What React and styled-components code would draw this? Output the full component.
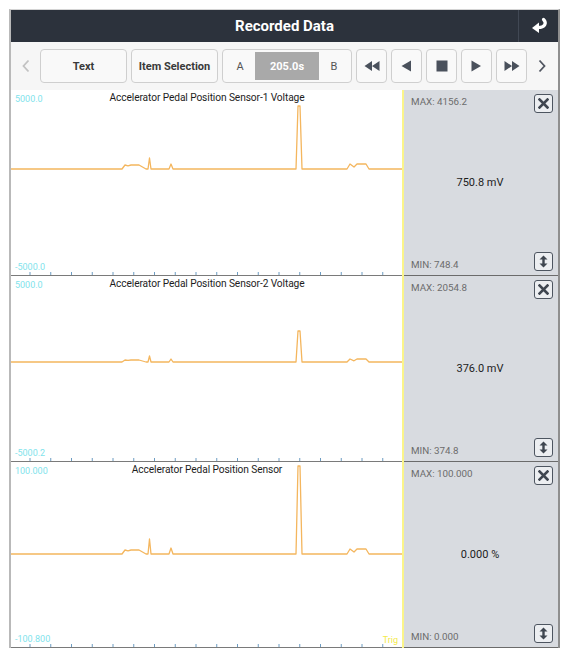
import React from 'react';
import styled, { createGlobalStyle } from 'styled-components';

const GlobalStyle = createGlobalStyle`
  body {
    margin: 0;
    background: #fff;
    font-family: Roboto, "Liberation Sans", sans-serif;
  }
`;

const Frame = styled.div`
  margin: 9px 0 0 9px;
  width: 551px;
  border-top: 1px solid #d4d4d4;
  border-left: 2px solid #b9b9b9;
  border-right: 2px solid #8f8f8f;
  box-sizing: border-box;
  position: relative;
`;

const Header = styled.div`
  height: 32px;
  background: #2c323c;
  display: grid;
  grid-template-columns: 1fr 40px;
  align-items: center;
`;

const Title = styled.div`
  color: #fff;
  font-weight: 700;
  font-size: 15px;
  text-align: center;
  padding-left: 40px;
`;

const BackBox = styled.div`
  height: 100%;
  border-left: 1px solid #414854;
  display: flex;
  align-items: center;
  justify-content: center;
`;

const Toolbar = styled.div`
  height: 48px;
  background: #f6f6f6;
  display: flex;
  align-items: flex-start;
  padding-top: 7px;
  box-sizing: border-box;
`;

const Chevron = styled.div`
  width: 29px;
  height: 34px;
  display: flex;
  align-items: center;
  justify-content: center;
  color: ${p => (p.$dim ? '#c2c2c2' : '#505560')};
`;

const Btn = styled.div`
  height: 34px;
  width: ${p => p.$w}px;
  margin-right: ${p => p.$gap ?? 4}px;
  box-sizing: border-box;
  border: 1px solid #cfcfcf;
  border-radius: 4px;
  background: #f9f9f9;
  display: flex;
  align-items: center;
  justify-content: center;
  font-size: 11px;
  font-weight: 700;
  color: #3a3a3a;
`;

const RangeGroup = styled(Btn)`
  justify-content: space-between;
  padding: 2px;
  font-weight: 400;
`;

const RangeLetter = styled.span`
  width: 30px;
  text-align: center;
  color: #555;
  font-size: 11px;
`;

const RangeValue = styled.span`
  flex: 1;
  align-self: stretch;
  background: #a9a9a9;
  color: #fff;
  font-weight: 700;
  display: flex;
  align-items: center;
  justify-content: center;
`;

const Panel = styled.div`
  display: grid;
  grid-template-columns: 391px 2px 1fr;
  height: 186px;
`;

const Chart = styled.div`
  position: relative;
  background: #fff;
`;

const Trig = styled.div`
  background: #fbf58a;
`;

const Info = styled.div`
  background: #d8dbe0;
  border-bottom: 1px solid #6b6b6b;
  display: flex;
  flex-direction: column;
  padding: 4px 5px 4px 7px;
  box-sizing: border-box;
`;

const InfoRow = styled.div`
  display: flex;
  justify-content: space-between;
  align-items: ${p => (p.$bottom ? 'flex-end' : 'flex-start')};
`;

const Stat = styled.span`
  font-size: 9.8px;
  color: #6c6c6c;
  padding-top: ${p => (p.$bottom ? 0 : 2)}px;
  line-height: 12px;
`;

const Value = styled.div`
  flex: 1;
  display: flex;
  align-items: center;
  justify-content: center;
  font-size: 11px;
  color: #1c1c1c;
  padding-right: 4px;
`;

const IconBtn = styled.div`
  width: 19px;
  height: 19px;
  box-sizing: border-box;
  border: 1.5px solid #4d5560;
  border-radius: 3px;
  background: #eceef1;
  display: flex;
  align-items: center;
  justify-content: center;
`;

const ScaleLabel = styled.span`
  position: absolute;
  left: 4px;
  font-size: 9px;
  color: #7fe3ec;
  ${p => (p.$bottom ? 'bottom: 4px;' : 'top: 4px;')}
`;

const TrigLabel = styled.span`
  position: absolute;
  right: 4px;
  bottom: 3px;
  font-size: 9px;
  color: #f3ea4a;
`;

const ChartTitle = styled.span`
  position: absolute;
  top: 2px;
  left: 0;
  width: 392px;
  text-align: center;
  font-size: 10.2px;
  color: #1d1d1d;
  letter-spacing: -0.1px;
`;

const Plot = styled.svg`
  position: absolute;
  left: 0;
  top: 0;
  width: 391px;
  height: 186px;
`;

const TabMark = styled.div`
  position: absolute;
  left: -2px;
  bottom: -2px;
  width: 34px;
  height: 2px;
  background: #1f2a66;
`;

const BackIcon = () => (
  <svg width="20" height="18" viewBox="0 0 20 18">
    <path d="M14.5 2.5 C18 6 16 10.5 9 10.5" fill="none" stroke="#fff" strokeWidth="3.2" strokeLinecap="round" />
    <path d="M10 5.5 L3 11 L10 16 Z" fill="#fff" />
  </svg>
);

const CloseIcon = () => (
  <svg width="11" height="11" viewBox="0 0 11 11">
    <path d="M1.5 1.5 L9.5 9.5 M9.5 1.5 L1.5 9.5" stroke="#3f4650" strokeWidth="2.6" strokeLinecap="square" />
  </svg>
);

const ResizeIcon = () => (
  <svg width="9" height="13" viewBox="0 0 9 13">
    <path d="M4.5 3 L4.5 10" stroke="#3f4650" strokeWidth="2.4" />
    <path d="M4.5 0.5 L8.5 4.5 L0.5 4.5 Z M4.5 12.5 L8.5 8.5 L0.5 8.5 Z" fill="#3f4650" />
  </svg>
);

const Tri = ({ dir, double, square }) => {
  if (square) {
    return (
      <svg width="12" height="12" viewBox="0 0 12 12">
        <rect x="0.5" y="0.5" width="11" height="11" fill="#4a515c" />
      </svg>
    );
  }
  const one = dir === 'l' ? 'M10 0.5 L10 11.5 L0.5 6 Z' : 'M0.5 0.5 L0.5 11.5 L10 6 Z';
  if (!double) {
    return (
      <svg width="11" height="12" viewBox="0 0 11 12">
        <path d={one} fill="#4a515c" />
      </svg>
    );
  }
  const two = dir === 'l'
    ? 'M8 1 L8 11 L0.5 6 Z M15.5 1 L15.5 11 L8 6 Z'
    : 'M0.5 1 L0.5 11 L8 6 Z M8 1 L8 11 L15.5 6 Z';
  return (
    <svg width="16" height="12" viewBox="0 0 16 12">
      <path d={two} fill="#4a515c" />
    </svg>
  );
};

// page-x of the signal features, the chart starts at x = 11
const buildPath = (base, [b, s, c, big, d]) => {
  const pts = [
    [11, 0], [122, 0], [125, b], [128, b * 0.8], [131, b], [139, b], [146, 0],
    [148, 0], [149.5, s], [151, 0], [169, 0], [171, c], [173, 0],
    [296, 0], [298, big], [300, big], [302, 0], [347, 0], [350, d],
    [354, d * 0.4], [357, d], [366, d], [369, 0], [403, 0],
  ];
  return pts.map(([x, dy], i) => `${i ? 'L' : 'M'}${x - 11} ${base - dy}`).join(' ');
};

const ticks = Array.from({ length: 19 }, (_, i) => 19 + i * 20.75);

const channels = [
  {
    title: 'Accelerator Pedal Position Sensor-1 Voltage',
    top: '5000.0', bottom: '-5000.0',
    max: 'MAX: 4156.2', min: 'MIN: 748.4', value: '750.8 mV',
    base: 79, amp: [4, 11, 5, 63, 5],
  },
  {
    title: 'Accelerator Pedal Position Sensor-2 Voltage',
    top: '5000.0', bottom: '-5000.2',
    max: 'MAX: 2054.8', min: 'MIN: 374.8', value: '376.0 mV',
    base: 86, amp: [2, 6, 3, 31, 3],
  },
  {
    title: 'Accelerator Pedal Position Sensor',
    top: '100.000', bottom: '-100.800',
    max: 'MAX: 100.000', min: 'MIN: 0.000', value: '0.000 %',
    base: 92, amp: [4, 15, 6, 88, 5], trig: true,
  },
];

const ChannelPanel = ({ ch }) => (
  <Panel>
    <Chart>
      <Plot viewBox="0 0 391 186">
        <path d={buildPath(ch.base, ch.amp)} fill="none" stroke="#f4b65e" strokeWidth="1.3" strokeLinejoin="round" />
        <line x1="0" y1="185.5" x2="391" y2="185.5" stroke="#7a7a7a" strokeWidth="1" />
        {ticks.map(x => (
          <line key={x} x1={x} y1="182" x2={x} y2="185" stroke="#6d9cc2" strokeWidth="1" />
        ))}
      </Plot>
      <ScaleLabel>{ch.top}</ScaleLabel>
      <ChartTitle>{ch.title}</ChartTitle>
      <ScaleLabel $bottom>{ch.bottom}</ScaleLabel>
      {ch.trig && <TrigLabel>Trig</TrigLabel>}
    </Chart>
    <Trig />
    <Info>
      <InfoRow>
        <Stat>{ch.max}</Stat>
        <IconBtn><CloseIcon /></IconBtn>
      </InfoRow>
      <Value>{ch.value}</Value>
      <InfoRow $bottom>
        <Stat $bottom>{ch.min}</Stat>
        <IconBtn><ResizeIcon /></IconBtn>
      </InfoRow>
    </Info>
  </Panel>
);

const App = () => (
  <>
    <GlobalStyle />
    <Frame>
      <Header>
        <Title>Recorded Data</Title>
        <BackBox><BackIcon /></BackBox>
      </Header>
      <Toolbar>
        <Chevron $dim>
          <svg width="8" height="14" viewBox="0 0 8 14"><path d="M6.5 1.5 L1.5 7 L6.5 12.5" fill="none" stroke="currentColor" strokeWidth="1.8" /></svg>
        </Chevron>
        <Btn $w={87}>Text</Btn>
        <Btn $w={87}>Item Selection</Btn>
        <RangeGroup $w={130}>
          <RangeLetter>A</RangeLetter>
          <RangeValue>205.0s</RangeValue>
          <RangeLetter>B</RangeLetter>
        </RangeGroup>
        <Btn $w={31}><Tri dir="l" double /></Btn>
        <Btn $w={31}><Tri dir="l" /></Btn>
        <Btn $w={31}><Tri square /></Btn>
        <Btn $w={31}><Tri dir="r" /></Btn>
        <Btn $w={31} $gap={0}><Tri dir="r" double /></Btn>
        <Chevron>
          <svg width="8" height="14" viewBox="0 0 8 14"><path d="M1.5 1.5 L6.5 7 L1.5 12.5" fill="none" stroke="currentColor" strokeWidth="1.8" /></svg>
        </Chevron>
      </Toolbar>
      {channels.map(ch => <ChannelPanel key={ch.title} ch={ch} />)}
      <TabMark />
    </Frame>
  </>
);

export default App;
